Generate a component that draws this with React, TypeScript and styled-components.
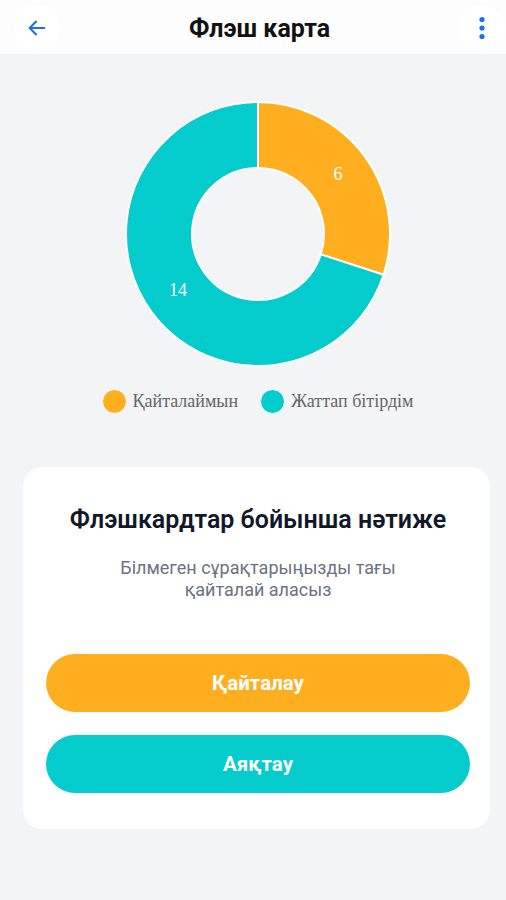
import React from "react";
import styled, { createGlobalStyle } from "styled-components";

const Global = createGlobalStyle`
  html, body { margin: 0; padding: 0; background: #f2f4f6; }
  body { font-family: Roboto, "Noto Sans", sans-serif; }
  * { box-sizing: border-box; }
`;

const Page = styled.div`
  width: 506px;
  min-height: 900px;
  background: #f2f4f6;
  display: flex;
  flex-direction: column;
`;

const Header = styled.header`
  height: 54px;
  background: #fdfdfe;
  display: flex;
  align-items: center;
  justify-content: space-between;
  padding: 2px 1px 0 14px;
`;

const RoundButton = styled.button`
  width: 46px;
  height: 46px;
  border-radius: 50%;
  border: none;
  background: #ffffff;
  display: flex;
  align-items: center;
  justify-content: center;
  padding: 0;
  color: #1d6fe6;
`;

const Title = styled.h1`
  margin: 0;
  font-family: Roboto, sans-serif;
  font-weight: 700;
  font-size: 25px;
  color: #111111;
`;

const ChartSection = styled.section`
  display: flex;
  flex-direction: column;
  align-items: center;
  padding: 46px 0 0 9px;
`;

const Legend = styled.div`
  display: flex;
  align-items: center;
  gap: 22px;
  margin-top: 21px;
`;

const LegendItem = styled.div`
  display: flex;
  align-items: center;
  gap: 6px;
  font-family: "Liberation Serif", serif;
  font-size: 18px;
  color: #666666;
`;

const Dot = styled.span<{ $color: string }>`
  width: 25px;
  height: 25px;
  border-radius: 50%;
  background: ${(p) => p.$color};
  border: 1px solid #ffffff;
`;

const Card = styled.div`
  margin: 53px 16px 0 23px;
  background: #ffffff;
  border-radius: 20px;
  padding: 38px 20px 36px 23px;
  display: flex;
  flex-direction: column;
  align-items: center;
`;

const CardTitle = styled.h2`
  margin: 0;
  font-family: Roboto, sans-serif;
  font-weight: 600;
  font-size: 25px;
  color: #111827;
  text-align: center;
`;

const CardText = styled.p`
  margin: 23px 0 0;
  font-family: Roboto, sans-serif;
  font-size: 18px;
  line-height: 22px;
  color: #6b7280;
  text-align: center;
  width: 320px;
`;

const Buttons = styled.div`
  align-self: stretch;
  display: flex;
  flex-direction: column;
  gap: 23px;
  margin-top: 53px;
`;

const ActionButton = styled.button<{ $color: string }>`
  height: 58px;
  border: none;
  border-radius: 29px;
  background: ${(p) => p.$color};
  color: #ffffff;
  font-family: Roboto, sans-serif;
  font-weight: 700;
  font-size: 20.5px;
`;

const ORANGE = "#ffae1f";
const TEAL = "#05cccc";

function Donut() {
  return (
    <svg width="268" height="268" viewBox="-2 -2 268 268">
      <path
        d="M132 0 A132 132 0 0 1 257.54 172.79 L194.77 152.39 A66 66 0 0 0 132 66 Z"
        fill={ORANGE}
        stroke="#ffffff"
        strokeWidth="2"
      />
      <path
        d="M257.54 172.79 A132 132 0 1 1 132 0 L132 66 A66 66 0 1 0 194.77 152.39 Z"
        fill={TEAL}
        stroke="#ffffff"
        strokeWidth="2"
      />
      <text x="212" y="74" fill="#ffffff" fontFamily="'Liberation Serif', serif" fontSize="18" textAnchor="middle" dominantBaseline="middle">6</text>
      <text x="52" y="190" fill="#ffffff" fontFamily="'Liberation Serif', serif" fontSize="18" textAnchor="middle" dominantBaseline="middle">14</text>
    </svg>
  );
}

export default function App() {
  return (
    <Page>
      <Global />
      <Header>
        <RoundButton aria-label="back">
          <svg width="22" height="22" viewBox="0 0 24 24" fill="none" stroke="currentColor" strokeWidth="2.2" strokeLinecap="round" strokeLinejoin="round">
            <path d="M20 12H4" />
            <path d="M11 5l-7 7 7 7" />
          </svg>
        </RoundButton>
        <Title>Флэш карта</Title>
        <RoundButton aria-label="menu">
          <svg width="6" height="24" viewBox="0 0 6 24" fill="currentColor">
            <circle cx="3" cy="3.5" r="2.6" />
            <circle cx="3" cy="12" r="2.6" />
            <circle cx="3" cy="20.5" r="2.6" />
          </svg>
        </RoundButton>
      </Header>
      <ChartSection>
        <Donut />
        <Legend>
          <LegendItem>
            <Dot $color={ORANGE} />
            Қайталаймын
          </LegendItem>
          <LegendItem>
            <Dot $color={TEAL} />
            Жаттап бітірдім
          </LegendItem>
        </Legend>
      </ChartSection>
      <Card>
        <CardTitle>Флэшкардтар бойынша нәтиже</CardTitle>
        <CardText>Білмеген сұрақтарыңызды тағы қайталай аласыз</CardText>
        <Buttons>
          <ActionButton $color={ORANGE}>Қайталау</ActionButton>
          <ActionButton $color={TEAL}>Аяқтау</ActionButton>
        </Buttons>
      </Card>
    </Page>
  );
}
